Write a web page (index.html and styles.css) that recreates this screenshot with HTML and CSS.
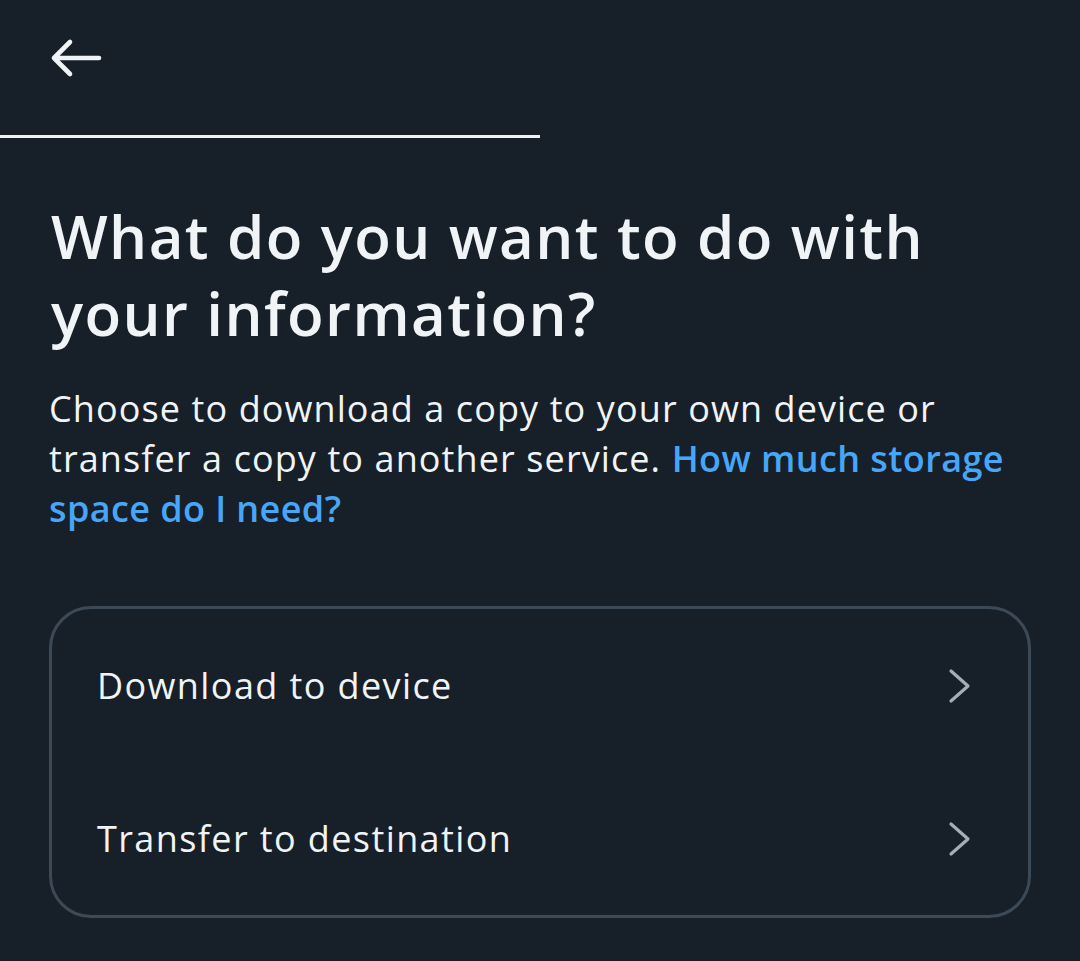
FILE: index.html
```html
<!DOCTYPE html>
<html lang="en">
<head>
<meta charset="utf-8">
<link rel="stylesheet" href="styles.css">
</head>
<body>
<div class="page">
  <header class="topbar">
    <button class="back" aria-label="Back">
      <svg width="52" height="40" viewBox="0 0 52 40" fill="none">
        <path d="M49 20H4M20 4L4 20L20 36" stroke="#f1f4f7" stroke-width="4.6" stroke-linecap="round" stroke-linejoin="round"/>
      </svg>
    </button>
  </header>
  <div class="progress"><div class="progress-fill" style="width:50%"></div></div>
  <main class="content">
    <h1 class="title">What do you want to do with your information?</h1>
    <p class="desc">Choose to download a copy to your own device or transfer a copy to another service. <a class="link" href="#">How much storage space do I need?</a></p>
    <div class="card">
      <div class="row">
        <span class="row-label">Download to device</span>
        <svg class="chev" width="24" height="36" viewBox="0 0 24 36" fill="none"><path d="M3 3L20 18L3 33" stroke="#a2afbb" stroke-width="3.2" stroke-linecap="round" stroke-linejoin="round"/></svg>
      </div>
      <div class="row">
        <span class="row-label">Transfer to destination</span>
        <svg class="chev" width="24" height="36" viewBox="0 0 24 36" fill="none"><path d="M3 3L20 18L3 33" stroke="#a2afbb" stroke-width="3.2" stroke-linecap="round" stroke-linejoin="round"/></svg>
      </div>
    </div>
  </main>
</div>
</body>
</html>
```
FILE: styles.css
```css
html, body {
  margin: 0;
  padding: 0;
  background: #172028;
}
body {
  font-family: "Open Sans", "Liberation Sans", sans-serif;
  color: #f1f4f7;
  width: 1080px;
  height: 961px;
  overflow: hidden;
}
.topbar {
  height: 116px;
  display: flex;
  align-items: center;
  padding-left: 50px;
}
.back {
  background: none;
  border: 0;
  padding: 0;
  display: flex;
  cursor: pointer;
}
.progress {
  margin-top: 19px;
  height: 3px;
  width: 100%;
}
.progress-fill {
  height: 100%;
  background: #eef1f4;
}
.content {
  padding: 0 49px;
}
.title {
  margin: 60px 0 0 2px;
  font-size: 60px;
  line-height: 77px;
  font-weight: 600;
  letter-spacing: 1.4px;
}
.desc {
  margin: 32px 0 0;
  font-size: 36px;
  line-height: 50px;
  font-weight: 400;
  letter-spacing: 1.1px;
}
.link {
  color: #47a6f7;
  font-weight: 600;
  letter-spacing: 0.4px;
  text-decoration: none;
}
.card {
  margin-top: 72px;
  border: 3px solid #3c4a57;
  border-radius: 42px;
  display: flex;
  flex-direction: column;
}
.row {
  height: 153px;
  display: flex;
  align-items: center;
  justify-content: space-between;
  padding: 0 56px 0 45px;
}
.row-label {
  font-size: 36px;
  letter-spacing: 1.4px;
}
.chev {
  display: block;
}
```
